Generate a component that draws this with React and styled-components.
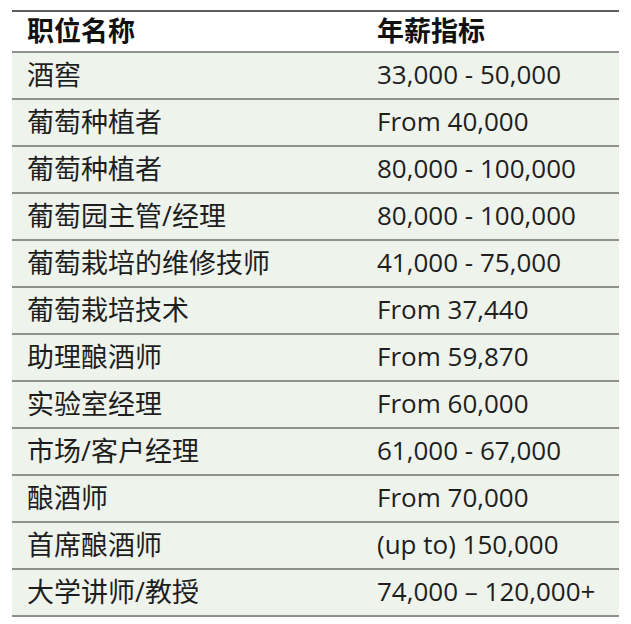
import React from 'react'
import styled, { createGlobalStyle } from 'styled-components'

const Global = createGlobalStyle`
  body {
    margin: 0;
    background: #fff;
  }
`

const rows = [
  ['酒窖', '33,000 - 50,000'],
  ['葡萄种植者', 'From 40,000'],
  ['葡萄种植者', '80,000 - 100,000'],
  ['葡萄园主管/经理', '80,000 - 100,000'],
  ['葡萄栽培的维修技师', '41,000 - 75,000'],
  ['葡萄栽培技术', 'From 37,440'],
  ['助理酿酒师', 'From 59,870'],
  ['实验室经理', 'From 60,000'],
  ['市场/客户经理', '61,000 - 67,000'],
  ['酿酒师', 'From 70,000'],
  ['首席酿酒师', '(up to) 150,000'],
  ['大学讲师/教授', '74,000 – 120,000+'],
]

const Page = styled.div`
  padding: 10px 12px 0 12px;
  width: 607px;
`

const Table = styled.div`
  border-top: 2px solid #5e5e5e;
  font-family: 'Open Sans', 'Noto Sans CJK SC', sans-serif;
  color: #1e1e1e;
`

const Row = styled.div`
  display: grid;
  grid-template-columns: 350px 1fr;
  align-items: center;
  height: ${p => (p.head ? 39 : 45)}px;
  background: ${p => (p.head ? '#fff' : '#eef3ec')};
  border-bottom: 2px solid #8f918f;
`

const Cell = styled.div`
  padding-left: 15px;
  padding-bottom: 3px;
  font-size: ${p => (p.num ? 26 : 27)}px;
  font-weight: ${p => (p.head ? 700 : 400)};
  color: ${p => (p.head ? '#111' : '#1e1e1e')};
  white-space: nowrap;
  line-height: 1;
`

export default function App() {
  return (
    <Page>
      <Global />
      <Table>
        <Row head>
          <Cell head>职位名称</Cell>
          <Cell head>年薪指标</Cell>
        </Row>
        {rows.map(([title, pay], i) => (
          <Row key={i}>
            <Cell>{title}</Cell>
            <Cell num>{pay}</Cell>
          </Row>
        ))}
      </Table>
    </Page>
  )
}
